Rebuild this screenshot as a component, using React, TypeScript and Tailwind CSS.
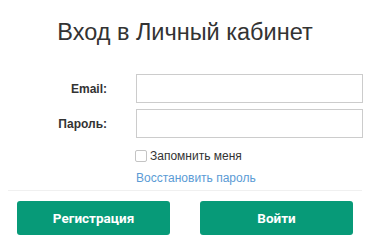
export default function App() {
  return (
    <div className="w-[370px] h-[252px] bg-white overflow-hidden font-['Liberation_Sans',Arial,sans-serif]">
      <h1 className="pt-[18px] text-center text-[23.5px] leading-[29px] text-[#333]">
        Вход в Личный кабинет
      </h1>

      <div className="mt-[27px] flex flex-col gap-[6px]">
        <div className="flex items-center">
          <label className="w-[107px] text-right text-[12px] font-bold text-[#333]">Email:</label>
          <input className="ml-[29px] w-[227px] h-[29px] border border-[#ccc] outline-none" />
        </div>
        <div className="flex items-center">
          <label className="w-[107px] text-right text-[12px] font-bold text-[#333]">Пароль:</label>
          <input type="password" className="ml-[29px] w-[227px] h-[29px] border border-[#ccc] outline-none" />
        </div>
      </div>

      <div className="ml-[135px] mt-[9px] flex items-center gap-[3px]">
        <span className="w-[12px] h-[12px] border border-[#c4c4c4] rounded-[2px] bg-white" />
        <span className="text-[12px] text-[#333]">Запомнить меня</span>
      </div>
      <a className="block ml-[136px] mt-[4px] text-[12px] text-[#5b9bd5]">Восстановить пароль</a>

      <div className="mx-[8px] mt-[3px] h-px bg-[#f0f0f0]" />

      <div className="mt-[10px] flex px-[17px] justify-between">
        <button className="w-[153px] h-[34px] rounded-[3px] bg-[#079a78] text-white text-[13.5px] font-bold font-['Roboto',sans-serif]">
          Регистрация
        </button>
        <button className="w-[153px] h-[34px] rounded-[3px] bg-[#079a78] text-white text-[13.5px] font-bold font-['Roboto',sans-serif]">
          Войти
        </button>
      </div>
    </div>
  );
}
